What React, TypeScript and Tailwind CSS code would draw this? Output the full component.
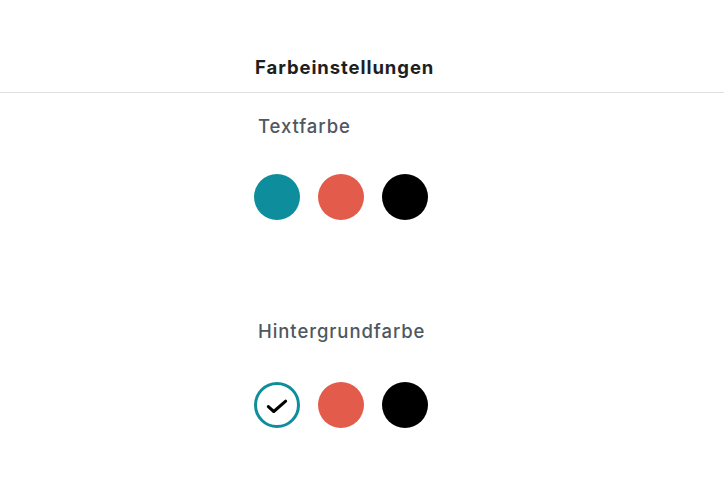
import { useState } from "react";

const colors = [
  { name: "Türkis", value: "#0e8e9c" },
  { name: "Rot", value: "#e25b4b" },
  { name: "Schwarz", value: "#000000" },
];

function Swatches({ selected, onSelect }: { selected: number | null; onSelect: (i: number) => void }) {
  return (
    <div className="flex gap-[18px]">
      {colors.map((c, i) =>
        selected === i ? (
          <button
            key={c.name}
            aria-label={c.name}
            onClick={() => onSelect(i)}
            className="flex h-[46px] w-[46px] items-center justify-center rounded-full border-[3px] bg-white"
            style={{ borderColor: c.value }}
          >
            <svg width="26" height="26" viewBox="0 0 24 24" fill="none" stroke="#000" strokeWidth="2.8" strokeLinecap="round" strokeLinejoin="round">
              <path d="M4 13.5l5 4.5L20 8.5" />
            </svg>
          </button>
        ) : (
          <button
            key={c.name}
            aria-label={c.name}
            onClick={() => onSelect(i)}
            className="h-[46px] w-[46px] rounded-full"
            style={{ backgroundColor: c.value }}
          />
        )
      )}
    </div>
  );
}

export default function App() {
  const [textColor, setTextColor] = useState<number | null>(null);
  const [bgColor, setBgColor] = useState<number | null>(0);

  return (
    <div className="h-[500px] w-full bg-white font-['Inter',sans-serif]">
      <div className="border-b border-[#e0e0e0] pl-[255px] pt-[55px] pb-[13px]">
        <h2 className="text-[18.5px] leading-6 font-bold tracking-[0.05em] text-[#1e1e1e]">Farbeinstellungen</h2>
      </div>
      <div className="pl-[254px]">
        <p className="mt-[21px] pl-[4px] text-[18.5px] leading-6 font-medium tracking-[0.05em] text-[#50575e]">Textfarbe</p>
        <div className="mt-[36px]">
          <Swatches selected={textColor} onSelect={setTextColor} />
        </div>
        <p className="mt-[99px] pl-[4px] text-[18.5px] leading-6 font-medium tracking-[0.05em] text-[#50575e]">Hintergrundfarbe</p>
        <div className="mt-[39px]">
          <Swatches selected={bgColor} onSelect={setBgColor} />
        </div>
      </div>
    </div>
  );
}
